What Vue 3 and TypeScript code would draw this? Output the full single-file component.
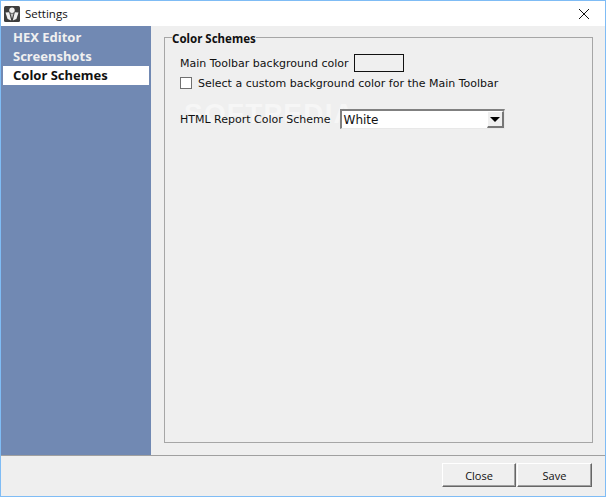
<script setup lang="ts">
import { ref } from "vue";

const navItems = ["HEX Editor", "Screenshots", "Color Schemes"];
const active = ref("Color Schemes");
const customToolbar = ref(false);
</script>

<template>
  <div class="window">
    <header class="titlebar">
      <svg class="app-icon" width="16" height="16" viewBox="0 0 16 16">
        <rect width="16" height="16" rx="1.5" fill="#3d3d3d" />
        <circle cx="8" cy="4.2" r="2.7" fill="#efefef" />
        <path d="M1.5 6.5 L5.2 6.2 L7.2 14.5 L3.6 13 Z M14.5 6.5 L10.8 6.2 L8.8 14.5 L12.4 13 Z" fill="#efefef" />
        <path d="M6.4 7.5 L9.6 7.5 L8 12.5 Z" fill="#bbb" />
      </svg>
      <span class="title">Settings</span>
      <svg class="close-x" width="12" height="12" viewBox="0 0 12 12">
        <path d="M1 1 L11 11 M11 1 L1 11" stroke="#111" stroke-width="1" fill="none" />
      </svg>
    </header>

    <div class="body">
      <nav class="sidebar">
        <div
          v-for="item in navItems"
          :key="item"
          class="nav-item"
          :class="{ active: item === active }"
          @click="active = item"
        >{{ item }}</div>
      </nav>

      <main class="content">
        <fieldset class="group">
          <legend>Color Schemes</legend>
          <div class="row first">
            <span>Main Toolbar background color</span>
            <span class="swatch"></span>
          </div>
          <label class="row check">
            <input v-model="customToolbar" type="checkbox" />
            <span>Select a custom background color for the Main Toolbar</span>
          </label>
          <div class="row report">
            <span>HTML Report Color Scheme</span>
            <div class="combo">
              <span class="combo-value">White</span>
              <span class="combo-btn"><i></i></span>
            </div>
          </div>
          <div class="watermark">SOFTPEDIA</div>
        </fieldset>
      </main>
    </div>

    <footer class="footer">
      <button>Close</button>
      <button>Save</button>
    </footer>
  </div>
</template>

<style>
html, body {
  margin: 0;
  background: #efefef;
}
</style>

<style scoped>
.window {
  width: 606px;
  height: 497px;
  box-sizing: border-box;
  border: 1px solid #7fbcf5;
  display: flex;
  flex-direction: column;
  background: #efefef;
  font-family: "DejaVu Sans", sans-serif;
  font-size: 11px;
  color: #111;
  overflow: hidden;
}

.titlebar {
  height: 25px;
  flex: none;
  background: #fff;
  display: flex;
  align-items: center;
  padding-left: 3px;
}

.app-icon {
  margin-right: 5px;
}

.title {
  font-family: "Open Sans", sans-serif;
  font-size: 11.5px;
}

.close-x {
  margin-left: auto;
  margin-right: 15px;
}

.body {
  flex: 1;
  display: flex;
  min-height: 0;
  border-bottom: 1px solid #a0a0a0;
}

.sidebar {
  width: 150px;
  flex: none;
  background: #7189b3;
  padding: 2px 2px 0;
  box-sizing: border-box;
}

.nav-item {
  height: 19px;
  line-height: 19px;
  padding-left: 10px;
  font-family: "Noto Sans", sans-serif;
  font-weight: 700;
  font-size: 13px;
  color: #f0f0f0;
}

.nav-item.active {
  background: #fff;
  color: #111;
}

.content {
  flex: 1;
  padding: 2px 12px 12px 13px;
  min-width: 0;
  display: flex;
}

.group {
  flex: 1;
  margin: 0;
  padding: 0 0 0 15px;
  border: 1px solid #a6a6a6;
  position: relative;
  min-width: 0;
}

legend {
  margin-left: -8px;
  padding: 4px 0 0;
  font-family: "Noto Sans", sans-serif;
  font-weight: 700;
  font-size: 11.5px;
  line-height: 14px;
}

.row {
  display: flex;
  align-items: center;
  white-space: nowrap;
  position: relative;
  z-index: 1;
}

.first {
  margin-top: 8px;
  height: 18px;
  gap: 5px;
}

.swatch {
  width: 48px;
  height: 16px;
  border: 1px solid #111;
  background: #efefef;
}

.check {
  margin-top: 3px;
  height: 16px;
  gap: 6px;
}

.check input {
  appearance: none;
  width: 12px;
  height: 12px;
  margin: 0;
  background: #fff;
  border: 1px solid #707070;
  box-sizing: border-box;
}

.report {
  margin-top: 17px;
  height: 22px;
  gap: 9px;
}

.combo {
  width: 165px;
  height: 20px;
  box-sizing: border-box;
  background: #fff;
  border: 2px solid;
  border-color: #808080 #e8e8e8 #e8e8e8 #808080;
  border-right-width: 1px;
  border-bottom-width: 1px;
  display: flex;
  align-items: stretch;
  justify-content: space-between;
  padding-left: 2px;
  font-size: 12px;
}

.combo-value {
  align-self: center;
}

.combo-btn {
  width: 17px;
  box-sizing: border-box;
  background: #efefef;
  border-style: solid;
  border-width: 1px 2px 2px 1px;
  border-color: #fff #777 #777 #fff;
  display: flex;
  align-items: center;
  justify-content: center;
}

.combo-btn i {
  width: 0;
  height: 0;
  border-left: 5px solid transparent;
  border-right: 5px solid transparent;
  border-top: 5px solid #000;
}

.watermark {
  position: absolute;
  left: 19px;
  top: 52px;
  font-family: "Liberation Sans", sans-serif;
  font-weight: 700;
  font-size: 28px;
  line-height: 32px;
  letter-spacing: 1.2px;
  color: #f6f6f6;
  pointer-events: none;
}

.footer {
  height: 40px;
  flex: none;
  display: flex;
  justify-content: flex-end;
  padding: 7px 13px 0 0;
  box-sizing: border-box;
  gap: 1px;
}

.footer button {
  height: 24px;
  width: 74px;
  padding: 0;
  background: #efefef;
  border: 1px solid;
  border-color: #fff #666 #666 #fff;
  box-shadow: inset -1px -1px 0 #a0a0a0;
  font-family: "Open Sans", sans-serif;
  font-size: 11px;
  color: #111;
}

.footer button:last-child {
  width: 75px;
}
</style>
